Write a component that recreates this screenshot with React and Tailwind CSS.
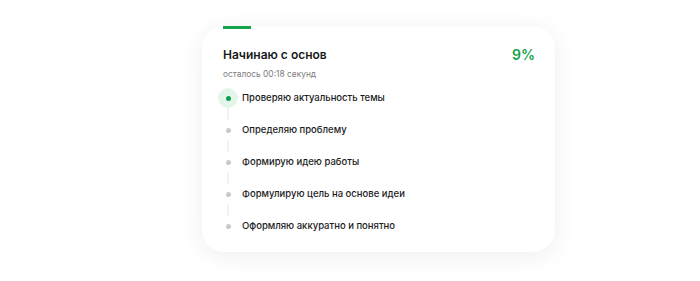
export default function App() {
  const steps = [
    "Проверяю актуальность темы",
    "Определяю проблему",
    "Формирую идею работы",
    "Формулирую цель на основе идеи",
    "Оформляю аккуратно и понятно",
  ];
  return (
    <div className="w-[700px] h-[281px] bg-white pt-[26px] pl-[202px] font-['Inter','Noto_Sans',sans-serif]">
      <div className="w-[353px] h-[226px] rounded-[22px] bg-white shadow-[0_4px_24px_rgba(0,0,0,0.07)] px-[21px]">
        <div className="w-[28px] h-[3px] bg-[#14a44d]" />
        <div className="flex justify-between items-start mt-[16px]">
          <div className="text-[12px] leading-[20px] font-semibold text-[#1a1a1a]">Начинаю с основ</div>
          <div className="text-[14px] leading-[20px] font-semibold text-[#14a44d] mr-[-1px]">9%</div>
        </div>
        <div className="text-[8.4px] leading-[14px] text-[#7c7c7c] mt-[2px]">осталось 00:18 секунд</div>
        <div className="flex flex-col mt-[7px] ml-[-5px]">
          {steps.map((s, i) => (
            <div key={i} className="flex flex-col">
              <div className="flex items-center h-[20px]">
                <div className="w-[20px] h-[20px] flex items-center justify-center shrink-0">
                  {i === 0 ? (
                    <div className="w-[20px] h-[20px] rounded-full bg-[#e4f5ea] flex items-center justify-center">
                      <div className="w-[5px] h-[5px] rounded-full bg-[#0f9d4f]" />
                    </div>
                  ) : (
                    <div className="w-[5px] h-[5px] rounded-full bg-[#c9c9c9]" />
                  )}
                </div>
                <div className="ml-[4px] text-[9.5px] font-medium text-[#1c1c1c]">{s}</div>
              </div>
              {i < steps.length - 1 && (
                <div className="w-[20px] h-[12px] flex justify-center">
                  <div className="w-[2px] h-[12px] bg-[#f2f2f2]" />
                </div>
              )}
            </div>
          ))}
        </div>
      </div>
    </div>
  );
}
